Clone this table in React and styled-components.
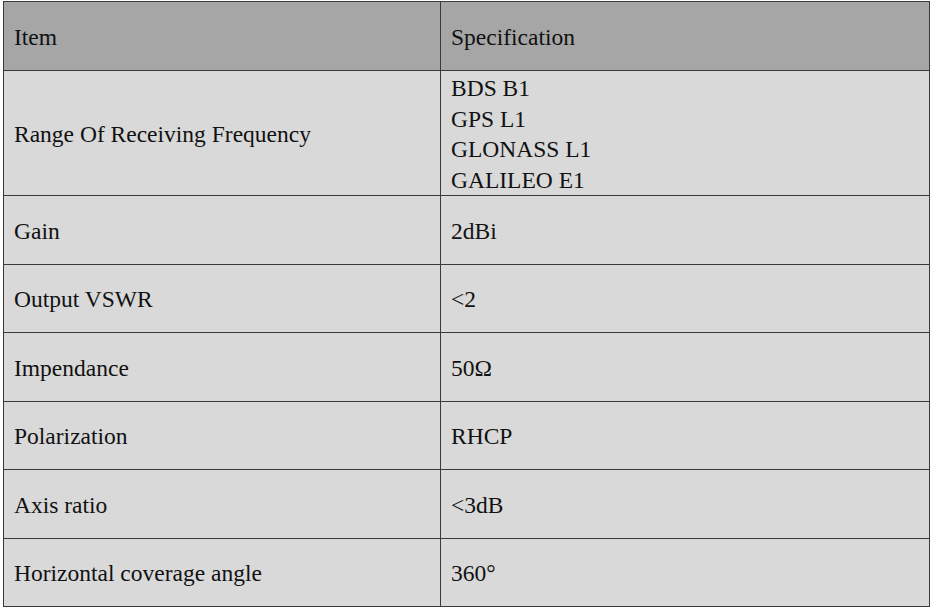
import React from 'react';
import styled, { createGlobalStyle } from 'styled-components';

const GlobalStyle = createGlobalStyle`
  body {
    margin: 0;
    background: #fff;
    font-family: "Liberation Serif", "Times New Roman", serif;
  }
`;

const Page = styled.div`
  padding: 1px 3px 0 3px;
`;

const SpecTable = styled.table`
  width: 927px;
  border-collapse: collapse;
  table-layout: fixed;
  color: #111;
  font-size: 23.5px;
`;

const HeadCell = styled.th`
  height: 66px;
  padding: 2px 0 0 10px;
  background: #a6a6a6;
  border: 1.5px solid #3a3a3a;
  text-align: left;
  font-weight: normal;
  vertical-align: middle;
`;

const Cell = styled.td`
  height: ${p => p.$tall ? '122px' : '65.5px'};
  padding: 2px 0 0 10px;
  background: #d9d9d9;
  border: 1.5px solid #3a3a3a;
  vertical-align: middle;
  line-height: 1.2;
`;

const Lines = styled.div`
  display: flex;
  flex-direction: column;
  line-height: 30.5px;
`;

const rows = [
  { item: 'Gain', spec: '2dBi' },
  { item: 'Output VSWR', spec: '<2' },
  { item: 'Impendance', spec: '50Ω' },
  { item: 'Polarization', spec: 'RHCP' },
  { item: 'Axis ratio', spec: '<3dB' },
  { item: 'Horizontal coverage angle', spec: '360°' },
];

const bands = ['BDS B1', 'GPS L1', 'GLONASS L1', 'GALILEO E1'];

export default function App() {
  return (
    <Page>
      <GlobalStyle />
      <SpecTable>
        <colgroup>
          <col style={{ width: '437px' }} />
          <col />
        </colgroup>
        <thead>
          <tr>
            <HeadCell>Item</HeadCell>
            <HeadCell>Specification</HeadCell>
          </tr>
        </thead>
        <tbody>
          <tr>
            <Cell $tall>Range Of Receiving Frequency</Cell>
            <Cell $tall>
              <Lines>
                {bands.map(b => <span key={b}>{b}</span>)}
              </Lines>
            </Cell>
          </tr>
          {rows.map(r => (
            <tr key={r.item}>
              <Cell>{r.item}</Cell>
              <Cell>{r.spec}</Cell>
            </tr>
          ))}
        </tbody>
      </SpecTable>
    </Page>
  );
}
